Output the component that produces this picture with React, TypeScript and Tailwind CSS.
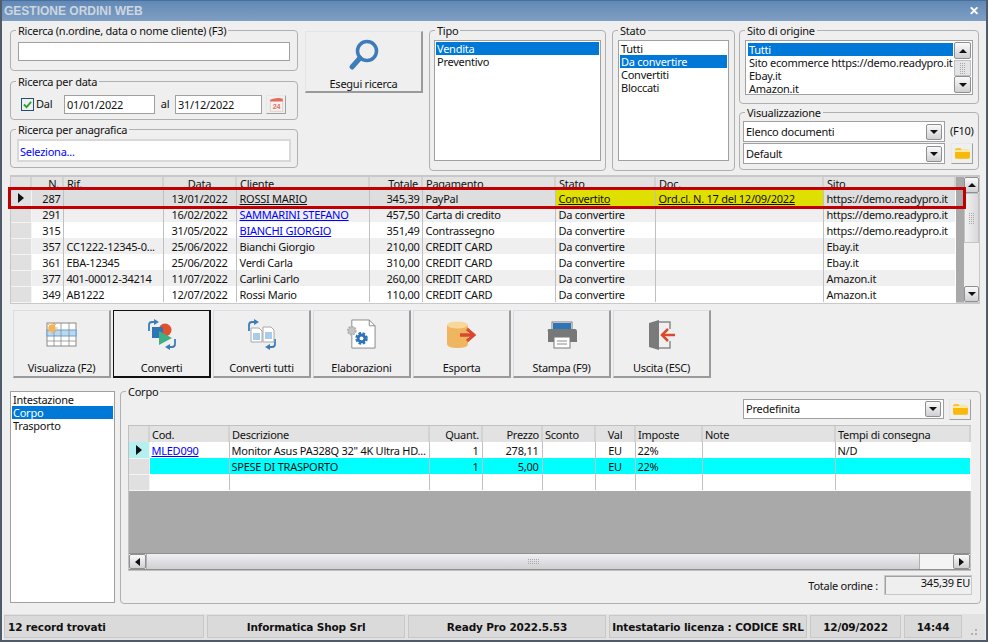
import type { ReactNode } from "react";

const ordini = [
  { n: "287", rif: "", data: "13/01/2022", cliente: "ROSSI MARIO", tot: "345,39", pag: "PayPal", stato: "Convertito", doc: "Ord.cl. N. 17 del 12/09/2022", sito: "https://demo.readypro.it", sel: true },
  { n: "291", rif: "", data: "16/02/2022", cliente: "SAMMARINI STEFANO", link: true, tot: "457,50", pag: "Carta di credito", stato: "Da convertire", doc: "", sito: "https://demo.readypro.it" },
  { n: "315", rif: "", data: "31/05/2022", cliente: "BIANCHI GIORGIO", link: true, tot: "351,49", pag: "Contrassegno", stato: "Da convertire", doc: "", sito: "https://demo.readypro.it" },
  { n: "357", rif: "CC1222-12345-0...", data: "25/06/2022", cliente: "Bianchi Giorgio", tot: "210,00", pag: "CREDIT CARD", stato: "Da convertire", doc: "", sito: "Ebay.it" },
  { n: "361", rif: "EBA-12345", data: "25/06/2022", cliente: "Verdi Carla", tot: "310,00", pag: "CREDIT CARD", stato: "Da convertire", doc: "", sito: "Ebay.it" },
  { n: "377", rif: "401-00012-34214", data: "11/07/2022", cliente: "Carlini Carlo", tot: "260,00", pag: "CREDIT CARD", stato: "Da convertire", doc: "", sito: "Amazon.it" },
  { n: "349", rif: "AB1222", data: "12/07/2022", cliente: "Rossi Mario", tot: "110,00", pag: "CREDIT CARD", stato: "Da convertire", doc: "", sito: "Amazon.it" },
];

function Group({ title, className, pad = "", children }: { title: string; className: string; pad?: string; children?: ReactNode }) {
  return (
    <fieldset className={`border border-[#b0b0b0] rounded-[4px] ${className}`}>
      <legend className="ml-[5px] px-[2px] h-[14px] leading-[16px]">{title}</legend>
      <div className={pad}>{children}</div>
    </fieldset>
  );
}

function ListBox({ items, selected, className }: { items: string[]; selected: number; className: string }) {
  return (
    <div className={`bg-white border border-[#a0a0a0] p-[1px] ${className}`}>
      {items.map((t, i) => (
        <div key={t} className={`h-[13px] leading-[13px] pl-[1px] whitespace-nowrap ${i === selected ? "bg-[#0078d7] text-white" : ""}`}>{t}</div>
      ))}
    </div>
  );
}

function Arrow({ dir }: { dir: "up" | "down" | "left" | "right" }) {
  const pts = { up: "0,5 8,5 4,1", down: "0,1 8,1 4,5", left: "6,0 6,8 1,4", right: "1,0 1,8 6,4" }[dir];
  const box = dir === "up" || dir === "down" ? "0 0 8 6" : "0 0 7 8";
  return (
    <svg viewBox={box} className={dir === "up" || dir === "down" ? "w-[8px] h-[6px]" : "w-[7px] h-[8px]"}>
      <polygon points={pts} fill="#111" />
    </svg>
  );
}

function ScrollBtn({ dir, className = "" }: { dir: "up" | "down" | "left" | "right"; className?: string }) {
  return (
    <div className={`flex items-center justify-center shrink-0 border border-[#8f8f8f] rounded-[2px] bg-gradient-to-b from-[#fafafa] to-[#d0d0d4] ${className}`}>
      <Arrow dir={dir} />
    </div>
  );
}

function Combo({ text, className }: { text: string; className: string }) {
  return (
    <div className={`flex items-center bg-white border border-[#a0a0a0] pl-[2px] pr-[2px] ${className}`}>
      <span className="flex-1 pt-[1px]">{text}</span>
      <ScrollBtn dir="down" className="w-[16px] h-[16px]" />
    </div>
  );
}

function FolderBtn({ className }: { className: string }) {
  return (
    <div className={`flex items-center justify-center border border-t-[#e8e8e8] border-l-[#e8e8e8] border-r-[#a0a0a0] border-b-[#a0a0a0] ${className}`}>
      <svg viewBox="0 0 16 12" className="w-[17px] h-[13px]">
        <path d="M1 2.5Q1 1 2.5 1H6L7.5 2.5H13.5Q15 2.5 15 4V9.5Q15 11 13.5 11H2.5Q1 11 1 9.5Z" fill="#f9b90a" />
        <path d="M1 4.5H15V3.8Q15 2.5 13.5 2.5H2.5Q1 2.5 1 3.8Z" fill="#ffe9a0" />
      </svg>
    </div>
  );
}

function CalendarIcon() {
  return (
    <svg viewBox="0 0 18 18" className="w-[17px] h-[16px]">
      <rect x="2" y="3" width="14" height="13" fill="#f6f2ef" stroke="#d8d0cc" />
      <path d="M2 3Q10 0 16 2V5H2Z" fill="#e26a5a" />
      <text x="9" y="14" textAnchor="middle" fontSize="8" fontWeight="700" fill="#e0705f" fontFamily="Liberation Sans, sans-serif">24</text>
    </svg>
  );
}

function SearchIcon() {
  return (
    <svg viewBox="0 0 32 32" className="w-[32px] h-[32px]">
      <circle cx="19" cy="12" r="9.5" fill="none" stroke="#3d7cb8" strokeWidth="3.5" />
      <path d="M12 19L4 28" stroke="#3d7cb8" strokeWidth="5" strokeLinecap="round" />
    </svg>
  );
}

function ArrowsTurn() {
  return (
    <>
      <path d="M3 13V7Q3 4 6 4H9" fill="none" stroke="#3d7cb8" strokeWidth="1.8" />
      <polygon points="8,1 13,4 8,7" fill="#3d7cb8" />
      <path d="M29 21V26Q29 29 26 29H23" fill="none" stroke="#3d7cb8" strokeWidth="1.8" />
      <polygon points="24,26 19,29 24,32" fill="#3d7cb8" />
    </>
  );
}

const actionIcons: Record<string, ReactNode> = {
  view: (
    <svg viewBox="0 0 32 26" className="w-[32px] h-[26px]">
      <rect x="1" y="1" width="29" height="23" fill="#fff" stroke="#8a8a8a" />
      <rect x="1" y="8" width="29" height="6" fill="#bcd8ee" stroke="#5fa4d4" />
      <path d="M1 19H30M8 1V24M15 1V24M23 1V24" stroke="#8a8a8a" strokeWidth="0.8" fill="none" />
      <circle cx="6" cy="6" r="3.5" fill="#f6b352" />
      <path d="M6 0V12M0 6H12M2 2L10 10M10 2L2 10" stroke="#f6b352" strokeWidth="1" />
    </svg>
  ),
  convert: (
    <svg viewBox="0 0 32 33" className="w-[32px] h-[33px]">
      <ArrowsTurn />
      <circle cx="19" cy="12" r="6.5" fill="#e0522e" />
      <rect x="6" y="9" width="11" height="11" fill="#2f74b5" />
      <polygon points="13,13 26,20 13,27" fill="#3fae84" />
    </svg>
  ),
  convertAll: (
    <svg viewBox="0 0 32 33" className="w-[32px] h-[33px]">
      <ArrowsTurn />
      <path d="M5 10H13L16 13V24H5Z" fill="#fff" stroke="#a8a8a8" />
      <path d="M17 9H25L28 12V24H17Z" fill="#fff" stroke="#a8a8a8" />
      <path d="M7 15H14V22H7ZM19 14H26V21H19Z" fill="#a9cde8" />
    </svg>
  ),
  work: (
    <svg viewBox="0 0 32 32" className="w-[31px] h-[31px]">
      <path d="M6 1H24L30 7V30H6Z" fill="#fff" stroke="#8a8a8a" />
      <path d="M24 1V7H30" fill="none" stroke="#8a8a8a" />
      <circle cx="6" cy="12" r="4" fill="#c4c4c4" stroke="#b0b0b0" strokeWidth="2" strokeDasharray="2 1" />
      <circle cx="16" cy="20" r="5" fill="#2f74b5" stroke="#2f74b5" strokeWidth="3" strokeDasharray="2.5 1.5" />
      <circle cx="16" cy="20" r="2" fill="#fff" />
    </svg>
  ),
  export: (
    <svg viewBox="0 0 32 28" className="w-[32px] h-[28px]">
      <path d="M1 4V23Q1 27 11.5 27T22 23V4Z" fill="#efb55f" />
      <ellipse cx="11.5" cy="4" rx="10.5" ry="3.5" fill="#f8d89a" />
      <path d="M14 14H26" stroke="#d9492d" strokeWidth="3.5" />
      <path d="M21 8L28 14L21 20" fill="none" stroke="#d9492d" strokeWidth="3" />
    </svg>
  ),
  print: (
    <svg viewBox="0 0 32 28" className="w-[32px] h-[28px]">
      <rect x="6" y="1" width="20" height="9" fill="#fff" stroke="#7a7a7a" />
      <rect x="7" y="2" width="18" height="6" fill="#2f74b5" />
      <path d="M3 8H29Q31 8 31 11V21H2V11Q1 8 3 8Z" fill="#787878" />
      <rect x="8" y="16" width="16" height="11" fill="#fff" stroke="#7a7a7a" />
      <path d="M11 20H21M11 23H21" stroke="#8a8a8a" />
    </svg>
  ),
  exit: (
    <svg viewBox="0 0 28 32" className="w-[28px] h-[32px]">
      <path d="M11 3H22V10M22 22V29H11" fill="none" stroke="#8a8a8a" strokeWidth="1.5" />
      <polygon points="1,4 11,1 11,31 1,28" fill="#7a7a7a" />
      <path d="M14 16H27" stroke="#d9492d" strokeWidth="2.5" />
      <path d="M20 10L14 16L20 22" fill="none" stroke="#d9492d" strokeWidth="2.5" />
    </svg>
  ),
};

const actions = [
  { key: "view", label: "Visualizza (F2)" },
  { key: "convert", label: "Converti", active: true },
  { key: "convertAll", label: "Converti tutti" },
  { key: "work", label: "Elaborazioni" },
  { key: "export", label: "Esporta" },
  { key: "print", label: "Stampa (F9)" },
  { key: "exit", label: "Uscita (ESC)" },
];

function Th({ children, right, center, tight }: { children?: ReactNode; right?: boolean; center?: boolean; tight?: boolean }) {
  return (
    <th className={`font-normal p-0 ${tight ? "px-[2px]" : "px-[3px]"} bg-[#e2e2e2] border-r-2 border-[#d2d2d2] overflow-hidden whitespace-nowrap ${right ? "text-right" : center ? "text-center" : "text-left"}`}>
      {children}
    </th>
  );
}

function Grip({ vertical }: { vertical?: boolean }) {
  const dots = Array.from({ length: 18 });
  return (
    <div className={`grid gap-[1px] ${vertical ? "grid-cols-3" : "grid-cols-6"}`}>
      {dots.map((_, i) => <span key={i} className="w-[1px] h-[1px] bg-[#a8a8a8]" />)}
    </div>
  );
}

function Indicator({ on, className = "" }: { on?: boolean; className?: string }) {
  return (
    <td className={`p-0 border-r border-b border-[#f4f4f4] ${className}`}>
      {on && <div className="flex justify-center"><svg viewBox="0 0 6 10" className="w-[6px] h-[10px]"><polygon points="0,0 6,5 0,10" fill="#111" /></svg></div>}
    </td>
  );
}

function StatusCell({ className, children }: { className: string; children: ReactNode }) {
  return <div className={`h-[23px] leading-[23px] whitespace-nowrap border border-[#c8c8c8] bg-[#dadada] ${className}`}>{children}</div>;
}

export default function App() {
  return (
    <div className="w-[988px] h-[642px] overflow-hidden flex flex-col bg-[#efefef] border-x-[2px] border-b-[2px] border-[#4f5b68] text-[11px] tracking-[-0.25px] text-[#111] [font-family:'Noto_Sans',sans-serif]">
      {/* title bar */}
      <div className="h-[21px] shrink-0 flex items-center justify-between pl-[2px] pr-[7px] border-t border-[#4a6f9c] bg-gradient-to-b from-[#6189b6] to-[#7f9fc3] tracking-normal">
        <span className="font-bold text-[12px] text-[#cdd6e0] [font-family:'Liberation_Sans',sans-serif]">GESTIONE ORDINI WEB</span>
        <span className="text-white font-bold text-[12px] leading-none">✕</span>
      </div>

      <div className="flex-1 flex flex-col pl-[8px] pr-[7px] pt-[2px]">
        {/* filtri */}
        <div className="flex h-[148px] shrink-0">
          <div className="w-[288px] shrink-0 flex flex-col">
            <Group title="Ricerca (n.ordine, data o nome cliente) (F3)" className="h-[48px]" pad="px-[7px] pt-[5px]">
              <div className="h-[19px] bg-white border border-[#a0a0a0]" />
            </Group>
            <Group title="Ricerca per data" className="h-[46px] mt-[3px]" pad="px-[10px]">
              <div className="flex items-center h-[19px] mt-[7px]">
                <div className="w-[13px] h-[13px] border border-[#1f4e79] flex items-center justify-center mr-[2px]">
                  <svg viewBox="0 0 10 10" className="w-[9px] h-[9px]"><path d="M1 5L4 8L9 2" fill="none" stroke="#2ea02e" strokeWidth="2" /></svg>
                </div>
                <span className="w-[28px]">Dal</span>
                <div className="w-[91px] h-[19px] leading-[17px] bg-white border border-[#a0a0a0] pl-[2px]">01/01/2022</div>
                <span className="w-[20px] text-center">al</span>
                <div className="w-[87px] h-[19px] leading-[17px] bg-white border border-[#a0a0a0] pl-[2px]">31/12/2022</div>
                <div className="ml-[4px] w-[20px] h-[19px] flex items-center justify-center border border-t-[#e8e8e8] border-l-[#e8e8e8] border-r-[#a0a0a0] border-b-[#a0a0a0]"><CalendarIcon /></div>
              </div>
            </Group>
            <Group title="Ricerca per anagrafica" className="h-[46px] mt-[2px]" pad="px-[6px] pt-[3px]">
              <div className="h-[23px] leading-[21px] bg-white border-2 border-[#d8d8d8] pl-[1px] text-[#0000ff]">Seleziona...</div>
            </Group>
          </div>

          <div className="ml-[7px] mt-[8px] w-[118px] h-[62px] shrink-0 flex flex-col items-center border border-t-[#e4e4e4] border-l-[#e4e4e4] border-r-[#9a9a9a] border-b-[#9a9a9a] border-b-2 border-r-2">
            <div className="mt-[7px]"><SearchIcon /></div>
            <span className="mt-[5px]">Esegui ricerca</span>
          </div>

          <Group title="Tipo" className="ml-[6px] w-[177px] shrink-0 h-[148px]" pad="px-[4px] pt-[3px]">
            <ListBox items={["Vendita", "Preventivo"]} selected={0} className="h-[121px]" />
          </Group>
          <Group title="Stato" className="ml-[6px] w-[123px] shrink-0 h-[148px]" pad="px-[5px] pt-[3px]">
            <ListBox items={["Tutti", "Da convertire", "Convertiti", "Bloccati"]} selected={1} className="h-[121px]" />
          </Group>
          <div className="ml-[4px] w-[240px] shrink-0 flex flex-col">
            <Group title="Sito di origine" className="h-[81px]" pad="px-[5px] pt-[3px]">
              <div className="flex h-[55px] bg-white border border-[#a0a0a0] p-[1px]">
                <ListBox items={["Tutti", "Sito ecommerce https://demo.readypro.it", "Ebay.it", "Amazon.it"]} selected={0} className="flex-1 border-0 p-0" />
                <div className="w-[17px] flex flex-col">
                  <ScrollBtn dir="up" className="h-[17px]" />
                  <div className="h-[17px] mt-[1px] border border-[#c0c0c0] flex items-center justify-center bg-[#e4e4e6]"><Grip vertical /></div>
                  <ScrollBtn dir="down" className="h-[17px] mt-auto" />
                </div>
              </div>
            </Group>
            <Group title="Visualizzazione" className="h-[65px] mt-[1px]" pad="pl-[3px] pr-[3px] pt-[2px]">
              <div className="flex items-center h-[21px]">
                <Combo text="Elenco documenti" className="w-[202px] h-[21px] shrink-0" />
                <span className="ml-[5px]">(F10)</span>
              </div>
              <div className="flex items-center mt-[1px]">
                <Combo text="Default" className="w-[202px] h-[21px] shrink-0" />
                <FolderBtn className="ml-[6px] w-[22px] h-[21px]" />
              </div>
            </Group>
          </div>
        </div>

        {/* griglia ordini */}
        <div className="relative mt-[4px] h-[129px] w-[970px] shrink-0 flex border-x border-y-2 border-[#c8c8c8] bg-[#a9a9a9]">
          <table className="table-fixed w-[944px] h-fit shrink-0 border-collapse bg-white">
            <colgroup>
              <col className="w-[20px]" /><col className="w-[32px]" /><col className="w-[100px]" /><col className="w-[73px]" />
              <col className="w-[133px]" /><col className="w-[53px]" /><col className="w-[133px]" /><col className="w-[100px]" />
              <col className="w-[168px]" /><col className="w-[132px]" />
            </colgroup>
            <thead>
              <tr className="h-[13px] leading-[13px]">
                <Th /><Th right>N.</Th><Th>Rif.</Th><Th center>Data</Th><Th>Cliente</Th><Th right>Totale</Th><Th>Pagamento</Th><Th>Stato</Th><Th>Doc.</Th><Th>Sito</Th>
              </tr>
            </thead>
            <tbody>
              {ordini.map((o, i) => (
                <tr key={o.n} className={`h-[16px] leading-[15px] whitespace-nowrap ${o.sel ? "bg-[#dedede]" : i % 2 === 1 ? "bg-[#efefef]" : "bg-white"}`}>
                  <Indicator on={o.sel} className="bg-[#e0e0e0]" />
                  <td className="p-0 pr-[2px] text-right border-r border-[#c0c0c0]">{o.n}</td>
                  <td className="p-0 px-[3px] border-r border-[#c0c0c0] overflow-hidden">{o.rif}</td>
                  <td className="p-0 pr-[8px] text-right border-r border-[#c0c0c0]">{o.data}</td>
                  <td className={`p-0 px-[3px] border-r border-[#c0c0c0] ${o.link ? "text-[#0000ff] underline" : o.sel ? "underline" : ""}`}>{o.cliente}</td>
                  <td className="p-0 pr-[2px] text-right border-r border-[#c0c0c0]">{o.tot}</td>
                  <td className="p-0 px-[3px] border-r border-[#c0c0c0]">{o.pag}</td>
                  <td className={`p-0 px-[3px] border-r border-[#c0c0c0] ${o.sel ? "bg-[#e0e000] underline" : ""}`}>{o.stato}</td>
                  <td className={`p-0 px-[3px] border-r border-[#c0c0c0] ${o.sel ? "bg-[#e0e000] underline" : ""}`}>{o.doc}</td>
                  <td className="p-0 px-[3px]">{o.sito}</td>
                </tr>
              ))}
            </tbody>
          </table>
          <div className="ml-[8px] w-[16px] flex flex-col bg-[#f0f0f0]">
            <ScrollBtn dir="up" className="h-[16px]" />
            <div className="h-[50px] border border-[#c4c4c4] bg-gradient-to-r from-[#f2f2f2] to-[#d8d8dc] flex items-center justify-center"><Grip vertical /></div>
            <ScrollBtn dir="down" className="h-[16px] mt-auto" />
          </div>
          <div className="absolute left-[-3px] top-[10px] w-[958px] h-[22px] border-[3px] border-[#c00000] pointer-events-none" />
        </div>

        {/* pulsanti */}
        <div className="flex mt-[6px] ml-[3px] gap-[2px] shrink-0">
          {actions.map((a) => (
            <div key={a.key} className={`w-[98px] h-[68px] flex flex-col items-center border ${a.active ? "border-[#111] border-r-2 border-b-2" : "border-t-[#dcdce4] border-l-[#dcdce4] border-r-[#9a9a9a] border-b-[#9a9a9a] border-r-2 border-b-2"}`}>
              <div className="h-[50px] flex items-center justify-center pt-[2px]">{actionIcons[a.key]}</div>
              <span className="mt-[3px]">{a.label}</span>
            </div>
          ))}
        </div>

        {/* dettaglio */}
        <div className="flex mt-[6px] flex-1 min-h-0">
          <div className="mt-[7px] w-[105px] h-[212px] shrink-0">
            <ListBox items={["Intestazione", "Corpo", "Trasporto"]} selected={1} className="h-[212px]" />
          </div>
          <Group title="Corpo" className="ml-[5px] w-[861px] h-[220px] shrink-0" pad="px-[7px]">
            <div className="flex justify-end items-center h-[20px] mt-[1px] pr-[1px]">
              <Combo text="Predefinita" className="w-[201px] h-[20px]" />
              <FolderBtn className="ml-[5px] mr-[1px] w-[22px] h-[21px]" />
            </div>
            <div className="mt-[6px] w-[843px] h-[146px] flex flex-col border border-[#c0c0c0] bg-[#a9a9a9]">
              <table className="table-fixed w-[841px] border-collapse bg-white">
                <colgroup>
                  <col className="w-[20px]" /><col className="w-[80px]" /><col className="w-[200px]" /><col className="w-[53px]" />
                  <col className="w-[60px]" /><col className="w-[53px]" /><col className="w-[40px]" /><col className="w-[67px]" />
                  <col className="w-[133px]" /><col className="w-[135px]" />
                </colgroup>
                <thead>
                  <tr className="h-[16px] leading-[15px]">
                    <Th /><Th tight>Cod.</Th><Th tight>Descrizione</Th><Th tight right>Quant.</Th><Th tight right>Prezzo</Th><Th tight>Sconto</Th><Th center>Val</Th><Th tight>Imposte</Th><Th tight>Note</Th><Th tight>Tempi di consegna</Th>
                  </tr>
                </thead>
                <tbody className="leading-[15px] whitespace-nowrap">
                  <tr className="h-[16px]">
                    <Indicator on className="bg-[#b4f0f0]" />
                    <td className="p-0 px-[2px] border-r border-[#c0c0c0] text-[#0000ff] underline">MLED090</td>
                    <td className="p-0 px-[2px] border-r border-[#c0c0c0] overflow-hidden">Monitor Asus PA328Q 32" 4K Ultra HD...</td>
                    <td className="p-0 pr-[3px] text-right border-r border-[#c0c0c0]">1</td>
                    <td className="p-0 pr-[3px] text-right border-r border-[#c0c0c0]">278,11</td>
                    <td className="p-0 border-r border-[#c0c0c0]" />
                    <td className="p-0 text-center border-r border-[#c0c0c0]">EU</td>
                    <td className="p-0 px-[2px] border-r border-[#c0c0c0]">22%</td>
                    <td className="p-0 border-r border-[#c0c0c0]" />
                    <td className="p-0 px-[2px]">N/D</td>
                  </tr>
                  <tr className="h-[16px] bg-[#00ffff]">
                    <Indicator className="bg-[#e0e0e0]" />
                    <td className="p-0 border-r border-[#c0c0c0]" />
                    <td className="p-0 px-[2px] border-r border-[#c0c0c0]">SPESE DI TRASPORTO</td>
                    <td className="p-0 pr-[3px] text-right border-r border-[#c0c0c0]">1</td>
                    <td className="p-0 pr-[3px] text-right border-r border-[#c0c0c0]">5,00</td>
                    <td className="p-0 border-r border-[#c0c0c0]" />
                    <td className="p-0 text-center border-r border-[#c0c0c0]">EU</td>
                    <td className="p-0 px-[2px] border-r border-[#c0c0c0]">22%</td>
                    <td className="p-0 border-r border-[#c0c0c0]" />
                    <td className="p-0" />
                  </tr>
                  <tr className="h-[16px]">
                    <Indicator className="bg-[#e0e0e0]" />
                    <td className="p-0 border-r border-[#c0c0c0]" /><td className="p-0 border-r border-[#c0c0c0]" /><td className="p-0 border-r border-[#c0c0c0]" />
                    <td className="p-0 border-r border-[#c0c0c0]" /><td className="p-0 border-r border-[#c0c0c0]" /><td className="p-0 border-r border-[#c0c0c0]" />
                    <td className="p-0 border-r border-[#c0c0c0]" /><td className="p-0 border-r border-[#c0c0c0]" /><td className="p-0" />
                  </tr>
                </tbody>
              </table>
              <div className="mt-auto h-[17px] flex bg-[#f4f4f4] border-y border-[#8f8f8f]">
                <ScrollBtn dir="left" className="w-[17px]" />
                <div className="w-[774px] border-x border-[#b0b0b0] bg-gradient-to-b from-[#f0f0f2] to-[#cfcfd4] flex items-center justify-center"><Grip /></div>
                <div className="flex-1" />
                <ScrollBtn dir="right" className="w-[17px]" />
              </div>
            </div>
            <div className="flex justify-end items-center mt-[4px] mr-[1px]">
              <span className="pt-[3px]">Totale ordine :</span>
              <div className="ml-[6px] w-[88px] h-[20px] leading-[14px] text-right pr-[1px] border border-[#c8c8c8] shadow-[inset_1px_1px_0_#a0a0a0]">345,39 EU</div>
            </div>
          </Group>
        </div>

        {/* barra di stato */}
        <div className="h-[26px] shrink-0 mx-[-6px] pt-[1px] flex items-start gap-[3px] bg-[#e2e2e2] font-bold tracking-[-0.15px] [font-family:'DejaVu_Sans',sans-serif] text-[10.5px]">
          <StatusCell className="w-[200px] pl-[3px]">12 record trovati</StatusCell>
          <StatusCell className="w-[198px] text-center">Informatica Shop Srl</StatusCell>
          <StatusCell className="w-[198px] text-center">Ready Pro 2022.5.53</StatusCell>
          <StatusCell className="w-[198px] text-center">Intestatario licenza : CODICE SRL</StatusCell>
          <StatusCell className="w-[91px] text-center">12/09/2022</StatusCell>
          <StatusCell className="w-[58px] text-center">14:44</StatusCell>
          <div className="ml-[6px] mt-[14px] grid grid-cols-2 gap-[2px]">
            <span className="w-[1px] h-[1px]" /><span className="w-[2px] h-[2px] bg-[#b0b0b0]" />
            <span className="w-[2px] h-[2px] bg-[#b0b0b0]" /><span className="w-[2px] h-[2px] bg-[#b0b0b0]" />
          </div>
        </div>
      </div>
    </div>
  );
}
